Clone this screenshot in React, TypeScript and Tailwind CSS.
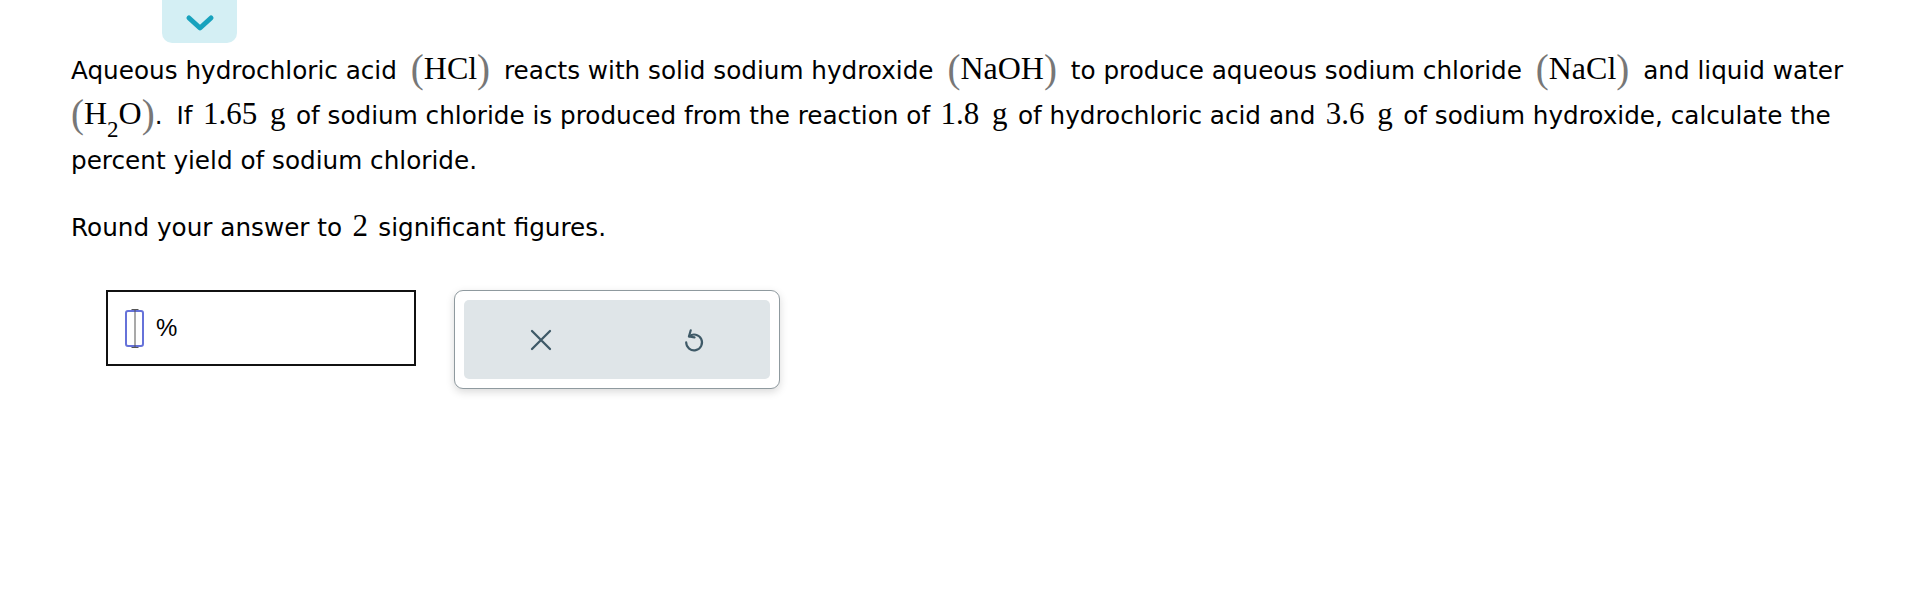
import React from 'react';

const prose = { fontFamily: '"DejaVu Sans", Verdana, sans-serif' };
const serif = { fontFamily: '"Liberation Serif", "Times New Roman", serif' };

function Paren({ children }: { children: React.ReactNode }) {
  return (
    <span className="mx-[6px] inline-block whitespace-nowrap leading-none" style={serif}>
      <span className="text-[39px] text-[#777] align-[-3px]">(</span>
      <span className="text-[32px] text-black">{children}</span>
      <span className="text-[39px] text-[#777] align-[-3px]">)</span>
    </span>
  );
}

function Num({ children }: { children: React.ReactNode }) {
  return (
    <span className="mx-[2.5px] text-[31px] leading-none" style={serif}>
      {children}
    </span>
  );
}

function CursorIcon() {
  return (
    <div className="relative w-[19px] h-[37px] rounded-[3px] border-2 border-[#6672d9]">
      <div className="absolute left-1/2 top-[-3px] bottom-[-3px] w-px -translate-x-1/2 bg-[#555]" />
      <div className="absolute left-1/2 top-[-3px] w-[7px] h-px -translate-x-1/2 bg-[#555]" />
      <div className="absolute left-1/2 bottom-[-3px] w-[7px] h-px -translate-x-1/2 bg-[#555]" />
    </div>
  );
}

export default function App() {
  return (
    <div className="min-h-screen bg-white px-[71px] text-black" style={prose}>
      <button className="ml-[91px] flex h-[43px] w-[75px] items-center justify-center rounded-b-[10px] bg-[#d4eff4] pt-[3px]">
        <svg width="32" height="20" viewBox="0 0 32 20" fill="none">
          <path d="M5 5 L16 15 L27 5" stroke="#17a2bd" strokeWidth="5" strokeLinecap="round" strokeLinejoin="round" />
        </svg>
      </button>

      <p className="mt-[5px] text-[24.7px] leading-[45px] whitespace-nowrap">
        Aqueous hydrochloric acid <Paren>HCl</Paren> reacts with solid sodium hydroxide <Paren>NaOH</Paren> to
        produce aqueous sodium chloride <Paren>NaCl</Paren> and liquid water
        <br />
        <span className="-ml-[6px]">
          <Paren>
            H<sub className="text-[23px] align-[-7px]">2</sub>O
          </Paren>
        </span>
        <span className="-ml-[6px]">.</span>
        <span className="ml-[14px]">If</span> <Num>1.65</Num> <Num>g</Num> of sodium chloride is produced from
        the reaction of <Num>1.8</Num> <Num>g</Num> of hydrochloric acid and <Num>3.6</Num> <Num>g</Num> of sodium
        hydroxide, calculate the
        <br />
        percent yield of sodium chloride.
      </p>

      <p className="mt-[22px] text-[24.7px] leading-[45px]">
        Round your answer to <Num>2</Num> significant figures.
      </p>

      <div className="mt-[40px] ml-[35px] flex items-start gap-[38px]">
        <div className="flex h-[76px] w-[310px] items-center gap-[12px] border-2 border-[#111] pl-[17px]">
          <CursorIcon />
          <span className="text-[24px]" style={{ fontFamily: '"Liberation Sans", Arial, sans-serif' }}>
            %
          </span>
        </div>

        <div className="h-[99px] w-[326px] rounded-[9px] border-[1.5px] border-[#8f9a9f] bg-white p-[9px] shadow-[0_3px_8px_rgba(0,0,0,0.15)]">
          <div className="grid h-full grid-cols-2 rounded-[5px] bg-[#dfe5e8]">
            <button className="flex items-center justify-center">
              <svg width="24" height="24" viewBox="0 0 24 24" fill="none">
                <path d="M3 3 L21 21 M21 3 L3 21" stroke="#3e5967" strokeWidth="2.3" strokeLinecap="round" />
              </svg>
            </button>
            <button className="flex items-center justify-center">
              <svg width="26" height="26" viewBox="0 0 24 24" fill="none">
                <path
                  d="M7.5 8.6 A7.3 7.3 0 1 1 4.8 14.2"
                  stroke="#3e5967"
                  strokeWidth="2"
                  strokeLinecap="round"
                />
                <path d="M9 3 L7.3 8.8 L12.5 9.6" stroke="#3e5967" strokeWidth="2" strokeLinecap="round" strokeLinejoin="round" />
              </svg>
            </button>
          </div>
        </div>
      </div>
    </div>
  );
}
